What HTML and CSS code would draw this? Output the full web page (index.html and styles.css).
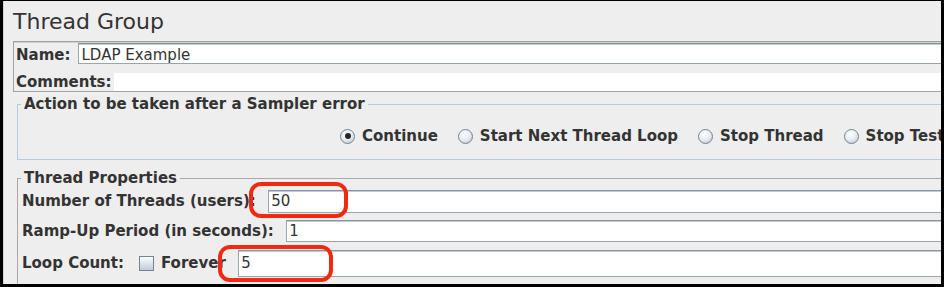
FILE: index.html
```html
<!DOCTYPE html>
<html>
<head>
<meta charset="utf-8">
<title>Thread Group</title>
<link rel="stylesheet" href="styles.css">
</head>
<body>
<div class="panel">
  <h1 class="title">Thread Group</h1>
  <div class="namebox">
    <div class="name-row">
      <span class="lbl">Name:</span>
      <div class="field name-field">LDAP Example</div>
    </div>
    <div class="comments-row">
      <span class="lbl">Comments:</span>
      <div class="textarea"></div>
    </div>
  </div>
  <fieldset class="group action">
    <legend>Action to be taken after a Sampler error</legend>
    <div class="radios">
      <span class="radio-item"><span class="radio on"></span>Continue</span>
      <span class="radio-item"><span class="radio"></span>Start Next Thread Loop</span>
      <span class="radio-item"><span class="radio"></span>Stop Thread</span>
      <span class="radio-item"><span class="radio"></span>Stop Test</span>
    </div>
  </fieldset>
  <fieldset class="group props">
    <legend>Thread Properties</legend>
    <div class="prop-row r1">
      <span class="lbl">Number of Threads (users):</span>
      <div class="field pfield">50</div>
    </div>
    <div class="prop-row r2">
      <span class="lbl">Ramp-Up Period (in seconds):</span>
      <div class="field pfield">1</div>
    </div>
    <div class="prop-row r3">
      <span class="lbl">Loop Count:</span>
      <span class="checkbox"></span>
      <span class="lbl forever">Forever</span>
      <div class="field pfield">5</div>
    </div>
  </fieldset>
  <span class="mark mark1"></span>
  <span class="mark mark2"></span>
</div>
</body>
</html>
```

FILE: styles.css
```css
html, body {
  margin: 0;
  padding: 0;
  background: #000;
  height: 287px;
  overflow: hidden;
}

.panel {
  position: relative;
  box-sizing: border-box;
  width: 938px;
  height: 283px;
  margin: 1px 3px 0 3px;
  background: #eeeeee;
  border-left: 1px solid #d4d4d4;
  overflow: hidden;
  font-family: "DejaVu Sans", "Liberation Sans", sans-serif;
  color: #333333;
}

.title {
  margin: 8px 0 0 9px;
  font-size: 22px;
  line-height: 26px;
  font-weight: normal;
  color: #333333;
}

.lbl {
  font-size: 15px;
  font-weight: bold;
  line-height: 17px;
  white-space: nowrap;
}

/* name / comments box */
.namebox {
  margin: 6px -120px 0 9px;
  border: 1px solid #a2a2a2;
  box-shadow: inset 0 1px 0 #d0d0d0;
  padding-left: 2px;
}

.name-row {
  display: flex;
  align-items: baseline;
  gap: 8px;
}

.field {
  box-sizing: border-box;
  background: #ffffff;
  border: 1px solid #9aa4ae;
  border-top-color: #89939c;
  box-shadow: inset 0 1px 0 #c4cdd6;
  font-size: 15px;
  line-height: 17px;
  padding-left: 2px;
  color: #333333;
}

.name-field {
  flex: 1;
  height: 21px;
  margin-top: 1px;
  padding-top: 3px;
}

.comments-row {
  display: flex;
  align-items: flex-start;
  gap: 2px;
  margin-top: 9px;
  height: 18px;
}

.comments-row .lbl {
  line-height: 18px;
}

.textarea {
  flex: 1;
  height: 18px;
  background: #ffffff;
}

/* titled groups */
.group {
  margin: 0 -120px 0 13px;
  padding: 0;
  min-width: 0;
}

.group legend {
  font-size: 15px;
  font-weight: bold;
  line-height: 17px;
  padding: 0 3px;
  color: #333333;
}

.action {
  margin-top: 4px;
  border: 1px solid #b5cbe2;
  padding-bottom: 13px;
}

.action legend {
  margin-left: 3px;
}

.radios {
  display: flex;
  align-items: center;
  height: 20px;
  margin-top: 13px;
  padding-left: 321px;
  gap: 19px;
  white-space: nowrap;
}

.radio-item {
  display: flex;
  align-items: center;
  font-size: 15px;
  font-weight: bold;
  line-height: 20px;
}

.radio {
  position: relative;
  box-sizing: border-box;
  width: 15px;
  height: 15px;
  margin: 0 7px 0 1px;
  border-radius: 50%;
  border: 1px solid #76838f;
  background: radial-gradient(circle at 40% 30%, #ffffff 0%, #e6ecf2 50%, #b3c1cf 100%);
  flex: none;
}

.radio.on::after {
  content: "";
  position: absolute;
  left: 3.5px;
  top: 3.5px;
  width: 6px;
  height: 6px;
  border-radius: 50%;
  background: #262626;
}

.props {
  margin-top: 10px;
  border: 1px solid #a8a8a8;
  padding-bottom: 20px;
}

.props legend {
  margin-left: 3px;
}

.prop-row {
  display: flex;
  align-items: center;
  padding-left: 4px;
}

.r1 {
  margin-top: 3px;
  height: 23px;
  gap: 12.5px;
}

.r2 {
  margin-top: 7px;
  height: 22px;
  gap: 12.5px;
}

.r3 {
  margin-top: 8px;
  height: 27px;
}

.pfield {
  flex: 1;
  height: 100%;
  display: flex;
  align-items: center;
}

.checkbox {
  box-sizing: border-box;
  width: 15px;
  height: 15px;
  margin: 0 7px 0 15px;
  border: 1px solid #76838f;
  background: linear-gradient(#fcfdfe, #c0ccd8);
  flex: none;
}

.forever {
  margin-right: 12.5px;
}

/* red annotation marks */
.mark {
  position: absolute;
  box-sizing: border-box;
  border: 4px solid #f2290f;
  border-radius: 12px;
}

.mark1 {
  left: 245px;
  top: 181px;
  width: 99px;
  height: 36px;
}

.mark2 {
  left: 214px;
  top: 244px;
  width: 115px;
  height: 37px;
}
```
